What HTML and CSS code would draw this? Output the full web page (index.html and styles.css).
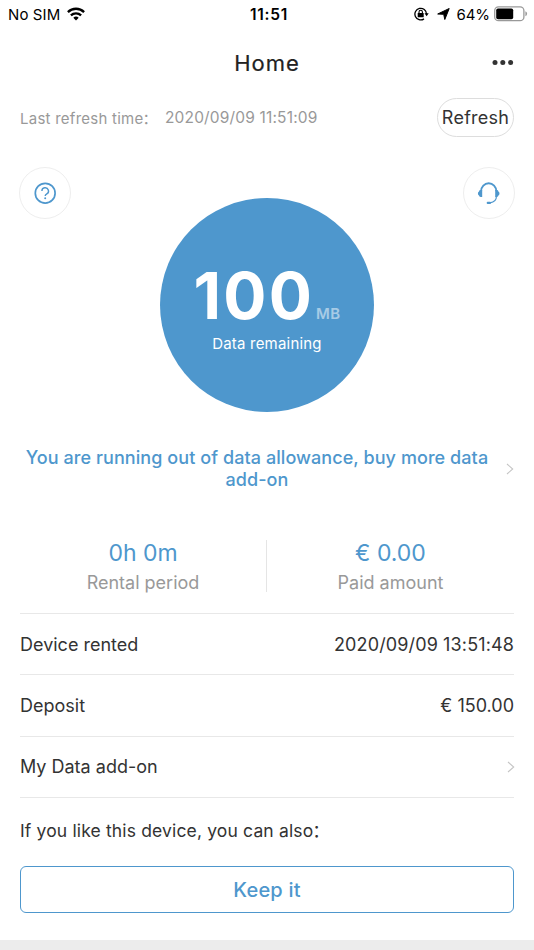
FILE: index.html
```html
<!DOCTYPE html>
<html lang="en">
<head>
<meta charset="utf-8">
<title>Home</title>
<link rel="stylesheet" href="styles.css">
</head>
<body>
<div class="screen">
  <div class="status">
    <div class="status-left">
      <span class="carrier">No SIM</span>
      <svg class="wifi" width="18" height="14" viewBox="0 0 18 14"><g fill="none" stroke="#000" stroke-width="2.3"><path d="M.9 5.1a11.5 11.5 0 0 1 16.2 0"/><path d="M3.9 8.4a7.3 7.3 0 0 1 10.2 0"/></g><path d="M9 13.6 6.3 10.7a3.9 3.9 0 0 1 5.4 0z"/></svg>
    </div>
    <span class="clock">11:51</span>
    <div class="status-right">
      <svg class="lock" width="15" height="14" viewBox="0 0 15 14"><path d="M10 11.9A5.8 5.8 0 1 1 12.5 7" fill="none" stroke="#000" stroke-width="1.3"/><path d="M10.5 6.2h4.2l-2.1 3z"/><rect x="3.7" y="6" width="6" height="4.3" rx=".5"/><path d="M5 6.3V5a1.7 1.7 0 0 1 3.4 0v1.3" fill="none" stroke="#000" stroke-width="1.1"/></svg>
      <svg class="arrow" width="13" height="12" viewBox="0 0 13 12"><path d="M12.2.5 7.8 11.5 6.7 6.3.7 6z" stroke="#000" stroke-width="1" stroke-linejoin="round"/></svg>
      <span class="percent">64%</span>
      <svg class="battery" width="34" height="16" viewBox="0 0 34 16"><rect x=".7" y=".9" width="29.2" height="13.8" rx="3.8" fill="#fff" stroke="#999" stroke-width="1.3"/><rect x="2.2" y="2.4" width="17" height="10.8" rx="1.8"/><path d="M31.4 5.3q1.7.7 1.7 2.5t-1.7 2.5z" fill="#999"/></svg>
    </div>
  </div>
  <header class="header">
    <h1 class="title">Home</h1>
    <svg class="more" width="22" height="6" viewBox="0 0 22 6" fill="#333"><circle cx="3" cy="2.5" r="2.5"/><circle cx="10.8" cy="2.5" r="2.5"/><circle cx="18.6" cy="2.5" r="2.5"/></svg>
  </header>
  <div class="refresh-row">
    <span class="refresh-label">Last refresh time<span class="colon">：</span></span>
    <span class="refresh-time">2020/09/09 11:51:09</span>
    <button class="refresh">Refresh</button>
  </div>
  <section class="hero">
    <button class="round" aria-label="Help">
      <svg width="24" height="24" viewBox="0 0 24 24" fill="none" stroke="#4e97cd"><circle cx="12.2" cy="12.2" r="9.9" stroke-width="1.7"/><path d="M8.9 10.1a3.3 3.3 0 1 1 4.9 2.8C12.6 13.6 12.2 13.9 12.2 15" stroke-width="1.4"/><circle cx="12.2" cy="17.2" r="1" fill="#4e97cd" stroke="none"/></svg>
    </button>
    <div class="gauge">
      <div class="amount"><span class="number">100</span><span class="unit">MB</span></div>
      <div class="remaining">Data remaining</div>
    </div>
    <button class="round" aria-label="Support">
      <svg width="24" height="24" viewBox="0 0 24 24" fill="#4e97cd"><path d="M4.1 10.2a7.6 8 0 0 1 15.2 0" fill="none" stroke="#4e97cd" stroke-width="1.9"/><path d="M5.2 9v7H3.6A1.6 1.6 0 0 1 2 14.6Q.9 14 .9 12.5T2 10.4Q2.2 9 3.6 9zM18.2 9v7h1.6a1.6 1.6 0 0 0 1.6-1.4q1.1-.6 1.1-2.1t-1.1-2.1Q21.200 9 19.800 9z"/><path d="M19.400 15.500c0 3.400-2.300 5.700-6.400 6.300" fill="none" stroke="#4e97cd" stroke-width="1.200"/><rect x="9.700" y="20.700" width="4.300" height="2.200" rx="1"/></svg>
    </button>
  </section>
  <div class="alert">
    <p class="alert-text">You are running out of data allowance, buy more data add-on</p>
    <svg class="chevron" width="8" height="12" viewBox="0 0 8 12"><path d="m1 1 5.7 5L1 11" fill="none" stroke="#c5c5c5" stroke-width="1.1"/></svg>
  </div>
  <div class="stats">
    <div class="stat"><span class="value">0h 0m</span><span class="label">Rental period</span></div>
    <div class="stat"><span class="value">€ 0.00</span><span class="label">Paid amount</span></div>
  </div>
  <div class="rows">
    <div class="row"><span class="name">Device rented</span><span class="date">2020/09/09 13:51:48</span></div>
    <div class="row"><span class="name">Deposit</span><span class="price">€ 150.00</span></div>
    <div class="row"><span class="name">My Data add-on</span><svg class="row-chevron" width="8" height="12" viewBox="0 0 8 12"><path d="m1 1 5.7 5L1 11" fill="none" stroke="#c5c5c5" stroke-width="1.1"/></svg></div>
  </div>
  <p class="prompt">If you like this device, you can also<span class="colon">：</span></p>
  <button class="keep">Keep it</button>
  <div class="footer"></div>
</div>
</body>
</html>
```
FILE: styles.css
```css
* { box-sizing: border-box; margin: 0; padding: 0; }
body { background: #fff; font-family: Inter, "Noto Sans CJK SC", sans-serif; color: #333; }
button { background: transparent; font: inherit; color: inherit; }
svg { display: block; flex: none; }
span, p, button { white-space: nowrap; }
.screen { width: 534px; height: 950px; display: flex; flex-direction: column; overflow: hidden; }
.status { height: 28px; flex: none; display: grid; grid-template-columns: 1fr auto 1fr; align-items: center; padding: 0 6px 0 8px; color: #000; font-size: 15px; }
.status-left, .status-right { display: flex; align-items: center; }
.wifi { margin-top: -1px; }
.status-right { justify-content: flex-end; }
.carrier { margin-right: 7px; letter-spacing: .1px; }
.clock { margin-left: 2px; font-weight: 600; font-size: 15.5px; letter-spacing: .7px; }
.lock { margin-top: -1px; }
.arrow { margin: -1px 7px 0 8px; }
.battery { margin-top: -1px; }
.percent { margin-right: 4px; font-size: 15px; letter-spacing: -.1px; }
.header { height: 70px; flex: none; display: grid; grid-template-columns: 1fr auto 1fr; align-items: center; padding: 0 20px; }
.title { grid-column: 2; font-size: 22px; font-weight: 400; letter-spacing: 1px; color: #222; -webkit-text-stroke: .2px #222; }
.more { justify-self: end; }
.refresh-row { height: 39px; flex: none; display: flex; align-items: center; padding: 0 20px; color: #999; }
.refresh { width: 77px; height: 39px; margin-left: auto; border: 1.5px solid #ddd; border-radius: 20px; color: #333; font-size: 18px; letter-spacing: .25px; display: flex; align-items: center; justify-content: center; }
.refresh-label { width: 145px; font-size: 15px; letter-spacing: .25px; }
.colon { margin-left: -1px; }
.refresh-time { font-size: 15.5px; letter-spacing: .16px; }
.hero { height: 275px; flex: none; display: flex; justify-content: space-between; padding: 30px 19px 0; }
.round { width: 52px; height: 52px; border: 1px solid #eee; border-radius: 50%; display: flex; align-items: center; justify-content: center; }
.gauge { width: 214px; height: 214px; margin-top: 31px; border-radius: 50%; background: #4e97cd; color: #fff; display: flex; flex-direction: column; align-items: center; padding-top: 60px; }
.amount { height: 76px; display: flex; align-items: baseline; line-height: 76px; }
.number { font-size: 64px; font-weight: 700; letter-spacing: 2.2px; }
.unit { margin-left: 2px; font-size: 15px; font-weight: 600; letter-spacing: .3px; opacity: .5; }
.remaining { font-size: 15px; line-height: 20px; letter-spacing: .2px; }
.alert { height: 44px; margin-top: 35px; flex: none; display: flex; align-items: center; padding: 0 20px; }
.alert-text { width: 474px; text-align: center; color: #4e97cd; font-size: 18px; line-height: 22px; font-weight: 500; letter-spacing: .07px; white-space: normal; }
.chevron { margin-left: auto; }
.stats { height: 52px; margin: 49px 20px 0; flex: none; display: grid; grid-template-columns: 1fr 1fr; grid-template-rows: 52px; }
.stat { display: flex; flex-direction: column; align-items: center; margin-left: -1px; }
.stat + .stat { border-left: 1px solid #e5e5e5; }
.value { font-size: 23px; line-height: 26px; color: #4e97cd; }
.label { margin-top: 5px; font-size: 18px; line-height: 24px; color: #999; }
.rows { margin: 21px 20px 0; flex: none; border-top: 1px solid #e8e8e8; }
.row { height: 61.3px; border-bottom: 1px solid #e8e8e8; display: flex; align-items: center; justify-content: space-between; font-size: 18px; }
.date { letter-spacing: .13px; }
.row-chevron { margin-right: -1px; }
.prompt { height: 68px; padding: 0 20px; flex: none; font-size: 17.5px; line-height: 65px; letter-spacing: .15px; }
.keep { height: 47px; margin: 0 20px; padding-top: 1px; flex: none; border: 1.5px solid #4e97cd; border-radius: 6px; color: #4e97cd; font-size: 20px; font-weight: 500; letter-spacing: .2px; }
.footer { height: 10px; margin-top: auto; background: #ececec; }
```
